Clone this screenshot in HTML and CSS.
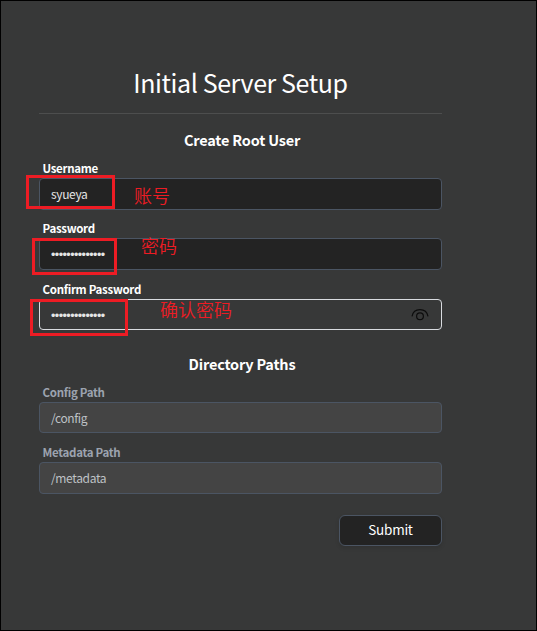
FILE: index.html
```html
<!DOCTYPE html>
<html lang="en">
<head>
<meta charset="utf-8">
<title>Initial Server Setup</title>
<link rel="stylesheet" href="styles.css">
</head>
<body>
<main class="page">
  <form class="setup">
    <h1 class="title"><span>Initial Server Setup</span></h1>
    <h2 class="section">Create Root User</h2>
    <div class="field">
      <div class="label">Username</div>
      <div class="input">syueya</div>
      <div class="mark mark-user"></div>
      <div class="note note-user" lang="zh-CN">账号</div>
    </div>
    <div class="field">
      <div class="label">Password</div>
      <div class="input"><span class="dots">••••••••••••••</span></div>
      <div class="mark mark-pass"></div>
      <div class="note note-pass" lang="zh-CN">密码</div>
    </div>
    <div class="field confirm">
      <div class="label">Confirm Password</div>
      <div class="input focused"><span class="dots">••••••••••••••</span>
        <svg class="eye" width="18" height="14" viewBox="0 0 18 14" fill="none" stroke="#0c0c0c" stroke-width="1.2"><path d="M1 8.4C1.8 4 5 1.6 9 1.6S16.200 4 17 8.400"/><circle cx="9" cy="8.300" r="3.400"/></svg>
      </div>
      <div class="mark mark-confirm"></div>
      <div class="note note-confirm" lang="zh-CN">确认密码</div>
    </div>
    <h2 class="section paths">Directory Paths</h2>
    <div class="field config">
      <div class="label muted">Config Path</div>
      <div class="input disabled">/config</div>
    </div>
    <div class="field">
      <div class="label muted">Metadata Path</div>
      <div class="input disabled">/metadata</div>
    </div>
    <div class="actions"><div class="submit">Submit</div></div>
  </form>
</main>
</body>
</html>
```
FILE: styles.css
```css
* { box-sizing: border-box; }
body { margin: 0; background: #373838; }
.page {
  height: 631px;
  border: 1px solid #000;
  padding: 57px 0 0 38px;
  overflow: hidden;
  color: #fff;
  font-family: "Source Sans Pro", "Noto Sans CJK SC", sans-serif;
}
.setup { width: 403px; }
.title {
  margin: 0;
  height: 56px;
  border-bottom: 1px solid #4d4e4e;
  font-size: 25px;
  font-weight: 400;
  letter-spacing: -0.4px;
  line-height: 48px;
  text-align: center;
}
.section {
  margin: 16px 0 11px;
  padding-left: 3px;
  font-size: 14.5px;
  font-weight: 700;
  letter-spacing: -0.2px;
  line-height: 20px;
  text-align: center;
}
.field { position: relative; height: 60px; margin-top: 0; }
.label {
  height: 17px;
  padding-left: 3.5px;
  font-size: 11.5px;
  font-weight: 700;
  letter-spacing: -0.3px;
  line-height: 15px;
}
.muted { color: #9ca3af; }
.input {
  display: flex;
  align-items: center;
  justify-content: space-between;
  height: 32px;
  padding: 0 12px 1px 11px;
  border: 1px solid #4b5563;
  border-radius: 4px;
  background: #232323;
  color: #e5e5e5;
  font-size: 12px;
  letter-spacing: -0.35px;
  line-height: 28px;
}
.confirm { margin-top: 1px; }
.focused { height: 31px; padding-bottom: 0; background: #373838; border-color: #d9dce0; }
.disabled { background: #444; color: #bfc2c6; }
.config .input { height: 31px; padding-bottom: 0; }
.dots {
  padding-top: 3px;
  font-family: "Liberation Sans", sans-serif;
  font-size: 12.5px;
  letter-spacing: -0.55px;
}
.paths { margin: 12px 0 11px; }
.actions { display: flex; justify-content: flex-end; margin-top: 10px; }
.submit {
  width: 103px;
  height: 31px;
  border: 1px solid #4b5563;
  border-radius: 6px;
  background: #232323;
  box-shadow: 0 2px 4px rgba(0, 0, 0, .12);
  font-size: 13.5px;
  letter-spacing: -0.25px;
  line-height: 27px;
  text-align: center;
}
.mark { position: absolute; border: 3px solid #ed1c24; }
.mark-user { left: -13px; top: 14px; width: 89px; height: 34px; }
.mark-pass { left: -7px; top: 17px; width: 85px; height: 37px; }
.mark-confirm { left: -9px; top: 17px; width: 98px; height: 37px; }
.note {
  position: absolute;
  color: #ed1c24;
  font-size: 18px;
  font-weight: 350;
  line-height: 20px;
  white-space: nowrap;
}
.note-user { left: 95px; top: 24px; }
.note-pass { left: 102px; top: 14px; }
.note-confirm { left: 121px; top: 17px; }
```
